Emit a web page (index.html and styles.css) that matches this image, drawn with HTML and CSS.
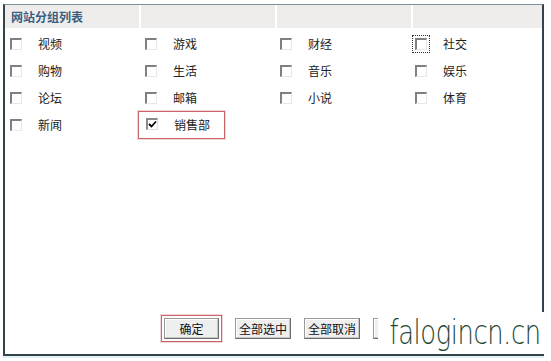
FILE: index.html
```html
<!DOCTYPE html>
<html>
<head>
<meta charset="utf-8">
<link rel="stylesheet" href="styles.css">
</head>
<body>
<div class="frame">
  <div class="head">
    <div class="hcell title">网站分组列表</div>
    <div class="hcell"></div>
    <div class="hcell"></div>
    <div class="hcell"></div>
  </div>
  <div class="grid">
    <label class="item"><span class="cb"></span><span class="txt">视频</span></label>
    <label class="item"><span class="cb"></span><span class="txt">游戏</span></label>
    <label class="item"><span class="cb"></span><span class="txt">财经</span></label>
    <label class="item"><span class="cb focus"></span><span class="txt">社交</span></label>
    <label class="item"><span class="cb"></span><span class="txt">购物</span></label>
    <label class="item"><span class="cb"></span><span class="txt">生活</span></label>
    <label class="item"><span class="cb"></span><span class="txt">音乐</span></label>
    <label class="item"><span class="cb"></span><span class="txt">娱乐</span></label>
    <label class="item"><span class="cb"></span><span class="txt">论坛</span></label>
    <label class="item"><span class="cb"></span><span class="txt">邮箱</span></label>
    <label class="item"><span class="cb"></span><span class="txt">小说</span></label>
    <label class="item"><span class="cb"></span><span class="txt">体育</span></label>
    <label class="item"><span class="cb"></span><span class="txt">新闻</span></label>
    <label class="item"><span class="mark"><span class="cb checked"><svg viewBox="0 0 9 9" width="9" height="9"><path d="M1 4 L3.5 6.5 L8 1.5" fill="none" stroke="#000" stroke-width="1.8"/></svg></span><span class="txt">销售部</span></span></label>
  </div>
  <div class="actions">
    <span class="hl"><button class="btn wide">确定</button></span>
    <button class="btn">全部选中</button>
    <button class="btn">全部取消</button>
    <button class="btn stub"></button>
  </div>
  <div class="wm"><span class="wmtext">falogincn.cn</span></div>
</div>
</body>
</html>
```
FILE: styles.css
```css
html, body { margin: 0; padding: 0; background: #fff; }
body { width: 551px; height: 361px; overflow: hidden; font-family: "Noto Sans CJK SC", "DejaVu Sans", sans-serif; font-size: 12px; color: #222; }
.frame {
  position: relative;
  margin: 4px 0 0 3px;
  width: 537px;
  height: 349px;
  border: 2px solid #34424c;
  border-top-color: #7f8f99;
  border-top-width: 1px;
  display: flex;
  flex-direction: column;
  box-shadow: 0 2px 0 #dff1f3;
}
.head { display: grid; grid-template-columns: 134px 134px 134px 1fr; column-gap: 2px; height: 23px; background: #fff; }
.hcell { background: #efedec; }
.title { font-weight: bold; color: #3a5f82; padding-left: 6px; line-height: 23px; font-size: 12px; }
.grid { display: grid; grid-template-columns: 135px 135px 135px 1fr; grid-auto-rows: 27px; padding-top: 2px; }
.item { display: flex; align-items: center; padding-left: 5px; }
.cb {
  width: 9px; height: 9px;
  border-top: 2px solid #808080; border-left: 2px solid #808080;
  border-right: 1px solid #e8e8e8; border-bottom: 1px solid #e8e8e8;
  background: #fff; display: inline-flex; align-items: center; justify-content: center;
  flex: none;
}
.cb.focus { outline: 1px dotted #333; outline-offset: 2px; }
.cb.checked { border-color: #8a8a8a #e0e0e0 #e0e0e0 #8a8a8a; }
.txt { margin-left: 16px; }
.mark { display: flex; align-items: center; margin-left: -7px; padding: 4px 14px 5px 7px; border: 1px solid #c9666c; box-shadow: 0 0 0 1px #f3d5d7; }
.actions { margin-top: auto; display: flex; align-items: center; padding-left: 156px; gap: 13px; height: 36px; margin-bottom: 8px; }
.hl { border: 1px solid #c9666c; padding: 2px; box-shadow: 0 0 0 1px #f3d5d7; display: inline-flex; }
.btn {
  font-family: "Noto Sans CJK SC", sans-serif; font-size: 12px; color: #111;
  height: 21px; padding: 0 3px; background: #efefef;
  border: 1px solid #6b6b6b; border-top-color: #9a9a9a; border-left-color: #9a9a9a;
  box-shadow: inset -1px -1px 0 #c8c8c8, inset 1px 1px 0 #fff;
  line-height: 17px;
}
.btn.wide { width: 55px; }
.btn.stub { width: 50px; }
.wm {
  position: absolute; right: -2px; bottom: 0; width: 166px; height: 42px;
  background: #fff; overflow: hidden;
  display: flex; justify-content: flex-end; align-items: center;
}
.wmtext {
  color: #1e4635;
  font-family: "DejaVu Sans", sans-serif; font-weight: 200;
  font-size: 33px; line-height: 40px; white-space: nowrap;
  transform: scaleX(0.78); transform-origin: right center;
  letter-spacing: -0.5px; padding-right: 4px;
}
```
